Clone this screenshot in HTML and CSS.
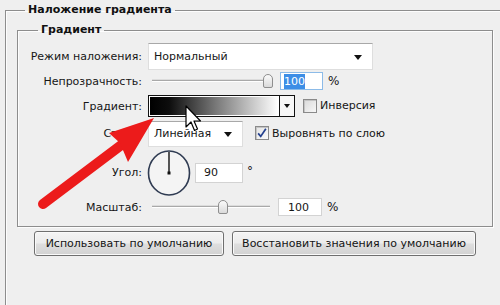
FILE: index.html
```html
<!DOCTYPE html>
<html lang="ru">
<head>
<meta charset="utf-8">
<title>Наложение градиента</title>
<link rel="stylesheet" href="styles.css">
</head>
<body>
<fieldset class="outer">
  <legend class="legend">Наложение градиента</legend>
  <fieldset class="inner">
    <legend class="legend">Градиент</legend>
    <div class="form">
      <span class="lbl r1">Режим наложения:</span>
      <div class="ctrl r1">
        <div class="select sel-wide"><span>Нормальный</span><i class="tri"></i></div>
      </div>

      <span class="lbl r2">Непрозрачность:</span>
      <div class="ctrl r2">
        <div class="slider"><div class="track"></div><div class="thumb" style="left:115px"></div></div>
        <div class="num focus"><span class="hl">100</span></div>
        <span class="unit">%</span>
      </div>

      <span class="lbl r3">Градиент:</span>
      <div class="ctrl r3">
        <div class="grad"><div class="grad-fill"></div><div class="grad-btn"><i class="tri small"></i></div></div>
        <span class="check"></span>
        <span class="ctext">Инверсия</span>
      </div>

      <span class="lbl r4">Стиль:</span>
      <div class="ctrl r4">
        <div class="select sel-short"><span>Линейная</span><i class="tri"></i></div>
        <span class="check checked"><svg viewBox="0 0 14 14" width="12" height="12"><path d="M2.5 7.5 L5.5 11 L11.5 2" fill="none" stroke="#24408e" stroke-width="2"/></svg></span>
        <span class="ctext">Выровнять по слою</span>
      </div>

      <span class="lbl r5">Угол:</span>
      <div class="ctrl r5">
        <svg class="dial" viewBox="0 0 44 46" width="44" height="46">
          <ellipse cx="22" cy="23" rx="20.5" ry="22" fill="#f4f4f4" stroke="#2f3b52" stroke-width="1.6"/>
          <line x1="22" y1="23" x2="22" y2="2" stroke="#111" stroke-width="1.4"/>
          <rect x="20.5" y="21.5" width="3" height="3" fill="#111"/>
        </svg>
        <div class="num num-angle"><span>90</span></div>
        <span class="deg">°</span>
      </div>

      <span class="lbl r6">Масштаб:</span>
      <div class="ctrl r6">
        <div class="slider"><div class="track"></div><div class="thumb" style="left:70px"></div></div>
        <div class="num num-scale"><span>100</span></div>
        <span class="unit">%</span>
      </div>
    </div>
  </fieldset>
  <div class="buttons">
    <button class="btn btn-default">Использовать по умолчанию</button>
    <button class="btn btn-restore">Восстановить значения по умолчанию</button>
  </div>
</fieldset>

<svg class="overlay" viewBox="0 0 500 305" width="500" height="305">
  <line x1="43" y1="204" x2="124" y2="143" stroke="#ec1b1b" stroke-width="10" stroke-linecap="round"/>
  <polygon points="154,118 109,133 120,143 128,162" fill="#ec1b1b"/>
  <path d="M186 106 L186 127 L191 122 L194.5 130.5 L197.5 129 L194 121 L200.5 121 Z" fill="#fff" stroke="#000" stroke-width="1.2" stroke-linejoin="round"/>
</svg>
</body>
</html>
```

FILE: styles.css
```css
html, body {
  margin: 0;
  padding: 0;
  background: #efefef;
  overflow: hidden;
  width: 500px;
  height: 305px;
}
body {
  font-family: "DejaVu Sans", "Liberation Sans", sans-serif;
  font-size: 11px;
  color: #161616;
  position: relative;
}
.outer {
  margin: 3px 0 0 5px;
  padding: 6px 0 0 11px;
  border: 1px solid #8d8d8d;
  border-right: none;
  border-bottom: none;
  box-shadow: inset 1px 1px 0 #fdfdfd;
  width: 495px;
  height: 302px;
  box-sizing: border-box;
  min-width: 0;
}
.legend {
  font-weight: bold;
  font-size: 11px;
  line-height: 14px;
  padding: 0 3px;
  margin-left: 8px;
  color: #111;
}
.inner .legend { margin-left: 20px; }
.inner {
  margin: 0;
  width: 476px;
  box-sizing: border-box;
  padding: 6px 0 10px 0;
  border: 1px solid #8d8d8d;
  box-shadow: inset 1px 1px 0 #fdfdfd, 1px 1px 0 #fdfdfd;
  min-width: 0;
}
.form {
  display: grid;
  grid-template-columns: 124px 1fr;
  grid-template-rows: 27px 22px 27px 28px 51px 18px;
  column-gap: 6px;
  align-items: center;
}
.lbl {
  text-align: right;
  white-space: nowrap;
}
.lbl.r3 { padding-top: 1px; }
.ctrl {
  display: flex;
  align-items: center;
  height: 100%;
}
.select {
  position: relative;
  height: 100%;
  box-sizing: border-box;
  background: #fff;
  border: 1px solid #dedede;
  border-top-color: #a8a8a8;
  display: flex;
  align-items: center;
  padding-left: 5px;
  font-size: 11px;
}
.sel-wide { width: 225px; }
.sel-short { width: 95px; height: 26px; margin-top: 1px; }
.tri {
  position: absolute;
  right: 10px;
  top: 50%;
  margin-top: -2px;
  width: 0;
  height: 0;
  border-left: 4.5px solid transparent;
  border-right: 4.5px solid transparent;
  border-top: 5px solid #111;
}
.tri.small {
  right: 4px;
  border-left-width: 3.5px;
  border-right-width: 3.5px;
  border-top-width: 4px;
}
.slider {
  position: relative;
  width: 125px;
  height: 16px;
}
.track {
  position: absolute;
  left: 4px;
  right: 3px;
  top: 7px;
  height: 1px;
  background: #a9a9a9;
  box-shadow: 0 1px 0 #fff, 0 -1px 0 #dcdcdc;
}
.thumb {
  position: absolute;
  top: 1px;
  width: 10px;
  height: 14px;
  box-sizing: border-box;
  border: 1px solid #8e8e8e;
  border-radius: 5px 5px 2px 2px;
  background: linear-gradient(#fbfbfb, #dadada);
}
.num {
  box-sizing: border-box;
  width: 43px;
  height: 18px;
  background: #fff;
  border: 1px solid #d3d3d3;
  display: flex;
  align-items: center;
  padding-left: 3px;
  margin-left: 7px;
}
.num.focus {
  border-color: #8cbbe8;
  height: 18px;
}
.hl {
  background: #3d8ee6;
  color: #fff;
  padding: 1px 0;
}
.num-angle {
  width: 48px;
  height: 20px;
  margin-left: 4px;
  padding-left: 8px;
}
.num-scale {
  width: 44px;
  height: 18px;
  margin-left: 5px;
  padding-left: 9px;
}
.unit {
  margin-left: 5px;
  font-size: 12px;
}
.deg {
  margin-left: 4px;
  align-self: flex-start;
  margin-top: 17px;
  font-size: 12px;
}
.grad {
  display: flex;
  width: 147px;
  height: 22px;
  box-sizing: border-box;
  border: 1px solid #111;
  background: #fff;
}
.grad-fill {
  flex: 1;
  margin: 1px;
  background: linear-gradient(to right, #000 0%, #0d0d0d 15%, #7a7a7a 52%, #fff 100%);
}
.grad-btn {
  position: relative;
  width: 14px;
  border-left: 1px solid #111;
  background: #f7f7f7;
}
.check {
  box-sizing: border-box;
  width: 14px;
  height: 14px;
  border: 1px solid #8a8a8a;
  background: linear-gradient(135deg, #dadada, #f7f7f7);
  box-shadow: inset 1px 1px 0 #c4c4c4;
  margin-left: 8px;
  display: flex;
  align-items: center;
  justify-content: center;
}
.check.checked {
  margin-left: 12px;
  background: linear-gradient(135deg, #e4e4e4, #fafafa);
}
.ctext {
  margin-left: 3px;
  white-space: nowrap;
}
.dial {
  display: block;
  margin-left: -1px;
}
.buttons {
  display: flex;
  gap: 8px;
  margin: 4px 0 0 17px;
}
.btn {
  font-family: "DejaVu Sans", "Liberation Sans", sans-serif;
  font-size: 11px;
  color: #141414;
  height: 25px;
  padding: 0;
  border: 1px solid #6f6f6f;
  border-radius: 3px;
  background: linear-gradient(#f4f4f4 0%, #ececec 48%, #dedede 52%, #d2d2d2 100%);
  box-shadow: inset 0 0 0 1px #fafafa;
}
.btn-default { width: 190px; }
.btn-restore { width: 244px; }
.overlay {
  position: absolute;
  left: 0;
  top: 0;
  pointer-events: none;
}
```
